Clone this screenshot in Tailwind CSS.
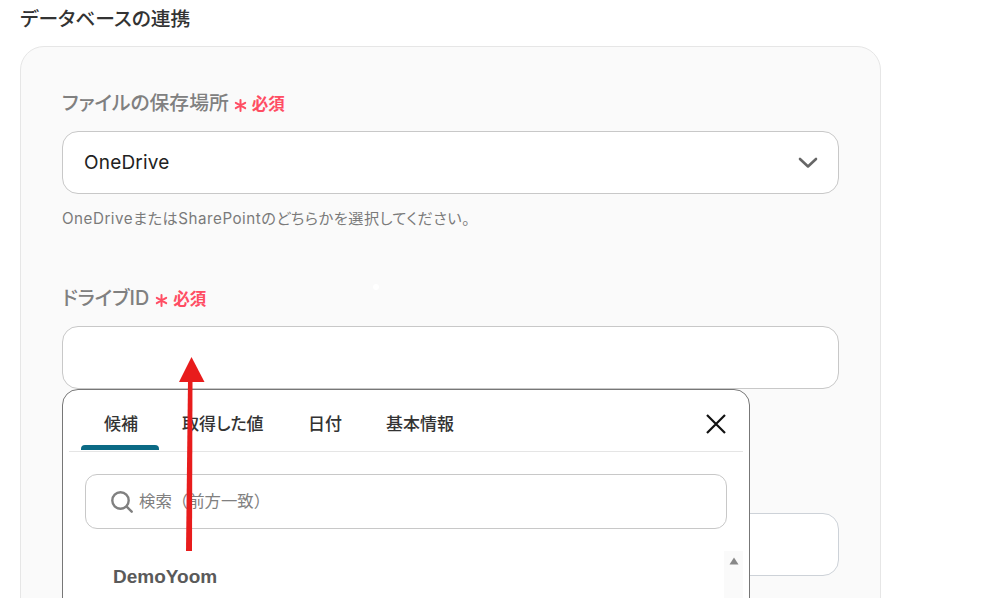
<!DOCTYPE html>
<html lang="ja">
<head>
<meta charset="utf-8">
<script src="https://cdn.jsdelivr.net/npm/@tailwindcss/browser@4"></script>
</head>
<body class="bg-white">
<div class="relative h-[598px] w-[982px] overflow-hidden bg-white font-['Inter','Noto_Sans_CJK_JP',sans-serif]">
  <div class="pl-5">
    <h2 class="h-[46px] pt-[5px] text-[19.800px] leading-[28px] font-medium text-[#333] [font-feature-settings:'palt']">データベースの連携</h2>
    <div class="h-[700px] w-[861px] rounded-t-[24px] border border-[#e6e6e6] bg-[#fafafa] pt-[42px] pl-[41px]">
      <div class="flex h-[42px] items-start">
        <span class="text-[19.800px] leading-[28px] font-medium text-[#808080] [font-feature-settings:'palt']">ファイルの保存場所</span>
        <span class="ml-[5px] flex h-[28px] items-center pt-[2px] text-[16.500px] font-semibold text-[#ff4d63]"><svg class="mr-[5px] mt-[3px]" width="13" height="13" viewBox="0 0 13 13" fill="none" stroke="#ff4d63" stroke-width="2" stroke-linecap="round"><path d="M6.500 1v11M1.800 3.800l9.400 5.400M11.200 3.800l-9.400 5.400"/></svg>必須</span>
      </div>
      <div class="flex h-[63px] w-[777px] items-center justify-between rounded-[16px] border border-[#c8c8c8] bg-white pr-[20px] pl-[21px]">
        <span class="pt-[2px] text-[19px] tracking-[0.2px] text-[#222]">OneDrive</span>
        <svg width="20" height="12" viewBox="0 0 20 12" fill="none" stroke="#666" stroke-width="2.600" stroke-linecap="round" stroke-linejoin="round"><path d="M2 2l8 7.500L18 2"/></svg>
      </div>
      <p class="mt-[15px] h-[67px] text-[15.200px] leading-[20px] tracking-[0.5px] text-[#7a7a7a] [font-feature-settings:'palt']">OneDriveまたはSharePointのどちらかを選択してください。</p>
      <div class="flex h-[50px] items-start pt-[8px]">
        <span class="text-[19.800px] leading-[28px] font-medium text-[#808080] [font-feature-settings:'palt']">ドライブID</span>
        <span class="ml-[6px] flex h-[28px] items-center pt-[2px] text-[16.500px] font-semibold text-[#ff4d63]"><svg class="mr-[5px] mt-[3px]" width="13" height="13" viewBox="0 0 13 13" fill="none" stroke="#ff4d63" stroke-width="2" stroke-linecap="round"><path d="M6.500 1v11M1.800 3.800l9.400 5.400M11.200 3.800l-9.400 5.400"/></svg>必須</span>
      </div>
      <div class="h-[63px] w-[777px] rounded-[16px] border border-[#c8c8c8] bg-white"></div>
      <div class="mt-[124px] h-[63px] w-[777px] rounded-[16px] border border-[#cdd2d8] bg-white"></div>
    </div>
  </div>

  <div class="absolute top-[389px] left-[62px] h-[240px] w-[688px] rounded-t-[16px] border border-[#777] bg-white">
    <div class="relative mx-[6px] flex h-[62px] border-b border-[#e5e5e5] text-[17px] font-medium text-[#333] [font-feature-settings:'palt']">
      <div class="relative w-[113px] pt-[22px] pl-[35px]">候補<span class="absolute bottom-[1px] left-[12px] h-[5px] w-[78px] rounded-t-[4px] bg-[#0b6a85]"></span></div>
      <div class="w-[126px] pt-[22px]">取得した値</div>
      <div class="w-[78px] pt-[22px]">日付</div>
      <div class="pt-[22px]">基本情報</div>
      <svg class="absolute top-[23px] right-[16px]" width="22" height="22" viewBox="0 0 22 22" fill="none" stroke="#111" stroke-width="2.200"><path d="M2 2l18 18M20 2L2 20"/></svg>
    </div>
    <div class="mx-[22px] mt-[22px] flex h-[55px] w-[642px] items-center rounded-[12px] border border-[#c8c8c8] bg-white pl-[24px]">
      <svg width="24" height="24" viewBox="0 0 24 24" fill="none" stroke="#808080" stroke-width="2.400" stroke-linecap="round"><circle cx="10.500" cy="10.500" r="8.200"/><path d="M16.700 16.700l5 5"/></svg>
      <span class="ml-[5px] text-[16.400px] text-[#808080]">検索（前方一致）</span>
    </div>
    <div class="mt-[35px] pl-[50px] font-['Liberation_Sans',sans-serif] text-[19px] leading-[26px] font-bold text-[#5a5a5a]">DemoYoom</div>
    <div class="absolute top-[161px] right-[6px] flex h-[80px] w-[19px] justify-center bg-[#fafafa] pt-[6px]"><svg width="10" height="8" viewBox="0 0 10 8"><path d="M5 .5L9.500 7.500H.5z" fill="#888"/></svg></div>
  </div>

  <svg class="absolute top-0 left-0" width="982" height="598" viewBox="0 0 982 598" fill="none">
    <path d="M186 551L188 380L192.500 380L192 551z" fill="#e81c1c"/>
    <path d="M191.500 357L204.500 382L179 382z" fill="#e81c1c"/>
    <circle cx="376" cy="287" r="3" fill="#fff"/>
  </svg>
</div>
</body>
</html>
